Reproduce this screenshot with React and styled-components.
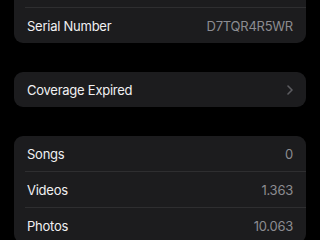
import React from "react";
import styled, { createGlobalStyle } from "styled-components";

const Global = createGlobalStyle`
  html, body { margin: 0; padding: 0; background: #000; }
  body { width: 320px; height: 240px; overflow: hidden; font-family: Inter, "Noto Sans", sans-serif; -webkit-font-smoothing: antialiased; }
`;

const Page = styled.div`
  display: flex;
  flex-direction: column;
  gap: 29px;
  padding: 0 14px;
  margin-top: -28px;
`;

const Card = styled.div`
  background: #1c1c1e;
  border-radius: 9px;
  overflow: hidden;
`;

const Row = styled.div`
  height: 35px;
  display: flex;
  align-items: center;
  justify-content: space-between;
  padding: 0 13px;
  & + & {
    border-top: 1px solid #2e2e30;
    margin-left: 11px;
    padding-left: 2px;
  }
`;

const Label = styled.span`
  color: #f0f0f2;
  font-size: 13px;
  letter-spacing: -0.25px;
`;

const Value = styled.span`
  color: #8c8c91;
  font-size: 13px;
  letter-spacing: -0.25px;
`;

const Chevron = () => (
  <svg width="6" height="10" viewBox="0 0 6 10">
    <path d="M1 1l4 4-4 4" fill="none" stroke="#5c5c60" strokeWidth="1.6" strokeLinecap="round" strokeLinejoin="round" />
  </svg>
);

export default function App() {
  return (
    <>
      <Global />
      <Page>
        <Card>
          <Row />
          <Row>
            <Label>Serial Number</Label>
            <Value>D7TQR4R5WR</Value>
          </Row>
        </Card>
        <Card>
          <Row>
            <Label>Coverage Expired</Label>
            <Chevron />
          </Row>
        </Card>
        <Card>
          <Row>
            <Label>Songs</Label>
            <Value>0</Value>
          </Row>
          <Row>
            <Label>Videos</Label>
            <Value>1.363</Value>
          </Row>
          <Row>
            <Label>Photos</Label>
            <Value>10.063</Value>
          </Row>
        </Card>
      </Page>
    </>
  );
}
